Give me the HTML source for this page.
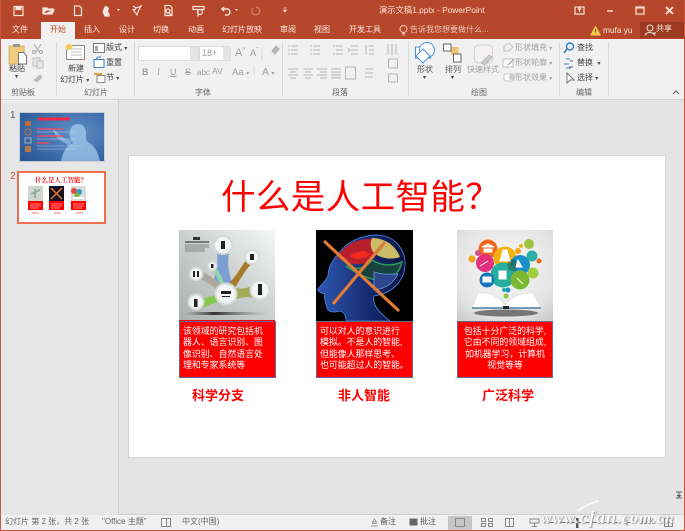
<!DOCTYPE html>
<html><head><meta charset="utf-8">
<style>
html,body{margin:0;padding:0;width:685px;height:531px;overflow:hidden;background:#e6e6e6}
body{position:relative;font-family:"Liberation Sans","Noto Sans CJK SC",sans-serif;filter:blur(.3px)}
.t{position:absolute;white-space:nowrap;line-height:1.2}
.b{position:absolute}
.tab{position:absolute;top:24px;font-size:8px;color:#fbe9e3;white-space:nowrap;line-height:12px}
.rb{color:#444;font-size:8px}
.dim{color:#a0a0a0;font-size:8px}
.grp{color:#666;font-size:8px}
.sep{position:absolute;top:42px;height:54px;width:1px;background:#dadada}
svg{position:absolute;overflow:visible}
.cap{position:absolute;background:#f00;color:#fff;font-size:8.9px;line-height:11.4px;border:1px solid #6a6a8a;box-sizing:border-box;top:321px;height:57px;padding-top:4px;white-space:nowrap}
.lab{position:absolute;top:388px;color:#f00;font-size:13px;font-weight:bold;white-space:nowrap;line-height:16px}
.st{position:absolute;top:517px;font-size:8px;color:#666;white-space:nowrap;line-height:10px}
</style></head><body>

<!-- title bar -->
<div class="b" style="left:0;top:0;width:685px;height:39px;background:#b7472a"></div>
<svg style="left:0;top:0" width="685" height="39" fill="none" stroke="#f6e4de" stroke-width="1.2">
<rect x="14" y="6.500" width="9" height="9"/><rect x="16" y="6.500" width="5" height="3" fill="#f6e4de"/>
<path d="M43 14V8h4l1 1h5v1M43 14h9l2-4h-8l-3 4" fill="#f6e4de"/>
<path d="M74.500 6h5l2 2v7.500h-7z"/>
<path d="M105 7a2 2 0 1 1 2 4l2 3v2h-4l-2-4z" fill="#f6e4de"/><path d="M117 9l3 0-1.500 2z" fill="#f6e4de" stroke="none"/>
<path d="M133 6l3 2 3-1 2-1-3 6-1 3-2-3-2-2 3-1"/>
<path d="M165 5.500h5l2 2v8h-7zM168 12l3 3"/><circle cx="168" cy="11" r="2"/>
<path d="M193 6.500h11v3h-11zM198 9.500v7"/><circle cx="200" cy="12" r="2.500"/>
<path d="M224 7l-2 2 2 2M222 9h5a3 3 0 0 1 0 6h-2" stroke-width="1.500"/><path d="M235 9l3 0-1.500 2z" fill="#f6e4de" stroke="none"/>
<path d="M253 8a4 4 0 1 0 3-1" stroke="#cd8470"/>
<path d="M283.500 8h3M283.500 10l3 0-1.500 2z" fill="#f6e4de" stroke-width=".7"/>
<rect x="575" y="7" width="9" height="7"/><path d="M579.500 8v4M578 9.500l1.500-1.500 1.500 1.500"/>
<path d="M607 11h6" stroke-width="1.400"/>
<rect x="636" y="7" width="8" height="7"/><path d="M636 7.500h8" stroke-width="2"/>
<path d="M666 7l7 7M673 7l-7 7" stroke-width="1.800"/>
</svg>
<div class="t" style="left:379px;top:6px;font-size:8.300px;color:#fbe4dc">演示文稿1.pptx - PowerPoint</div>

<!-- tabs -->
<div class="b" style="left:41px;top:22px;width:34px;height:18px;background:#f1f1f1"></div>
<div class="tab" style="left:12px">文件</div>
<div class="tab" style="left:50px;color:#c2492b">开始</div>
<div class="tab" style="left:84px">插入</div>
<div class="tab" style="left:119px">设计</div>
<div class="tab" style="left:153px">切换</div>
<div class="tab" style="left:188px">动画</div>
<div class="tab" style="left:222px">幻灯片放映</div>
<div class="tab" style="left:280px">审阅</div>
<div class="tab" style="left:314px">视图</div>
<div class="tab" style="left:349px">开发工具</div>
<svg style="left:399px;top:24px" width="10" height="13" fill="none" stroke="#eec6b8"><circle cx="4.500" cy="5" r="3.500"/><path d="M3 9.500h3M3.500 11h2"/></svg>
<div class="tab" style="left:410px;color:#eec6b8">告诉我您想要做什么...</div>
<svg style="left:590px;top:25px" width="12" height="11"><path d="M5.500 0.500L11 10.500H0z" fill="#f2c94c"/><path d="M5.500 4v3.500" stroke="#7a4a20"/></svg>
<div class="tab" style="left:603px;font-size:8.300px">mufa yu</div>
<div class="b" style="left:640px;top:22px;width:45px;height:16px;background:#9c3b22"></div>
<svg style="left:644px;top:24px" width="13" height="13" fill="none" stroke="#f6e4de"><circle cx="6" cy="4" r="3"/><path d="M1 11.500c1-4 8-4 10 0M9 9h3"/></svg>
<div class="tab" style="left:656px;top:23px;font-size:8px">共享</div>

<!-- ribbon -->
<div class="b" style="left:1px;top:39px;width:683px;height:60px;background:#f1f1f1"></div>
<div class="b" style="left:0;top:99px;width:685px;height:1px;background:#d6d6d6"></div>
<div class="b" style="left:0;top:100px;width:685px;height:3px;background:#ececec"></div>
<div class="sep" style="left:56px"></div><div class="sep" style="left:134px"></div><div class="sep" style="left:282px"></div><div class="sep" style="left:408px"></div><div class="sep" style="left:559px"></div><div class="sep" style="left:608px"></div>

<svg style="left:0;top:39px" width="685" height="60" fill="none" stroke="#9a9a9a" stroke-width="1">
<!-- paste -->
<rect x="9" y="7" width="15" height="18" fill="#f0ca7e" stroke="#d9b25f"/><rect x="13" y="5" width="7" height="3" fill="#999" stroke="none"/>
<path d="M18.500 13.500h5l3 3v8.500h-8z" fill="#fff" stroke="#777"/>
<path d="M34 5l6 9M41 5l-6 9" stroke="#aaa"/><circle cx="34" cy="13" r="1.500" stroke="#aaa"/><circle cx="41" cy="13" r="1.500" stroke="#aaa"/>
<rect x="33" y="19" width="7" height="8" stroke="#bbb" fill="#e8e8e8"/><rect x="37" y="22" width="6" height="7" stroke="#bbb" fill="#e8e8e8"/>
<path d="M34 41l6-5 2 2-5 5z" fill="#bbb" stroke="#bbb"/>
<!-- new slide -->
<rect x="66.500" y="6.500" width="18" height="14" fill="#fff" stroke="#888"/><path d="M71 10h11M71 13h11M71 16h11" stroke="#bbb"/><circle cx="69" cy="8" r="3" fill="#f2c94c" stroke="#eedf9a"/>
<!-- layout -->
<rect x="93.500" y="4.500" width="11" height="9" fill="#fff" stroke="#777"/><rect x="95" y="7" width="3" height="5" fill="#aaa" stroke="none"/>
<rect x="94" y="20.500" width="10" height="8" fill="#fff" stroke="#3a7fc1"/><path d="M96 20l2-2h3" stroke="#3a7fc1"/>
<rect x="97" y="36.500" width="8" height="7" fill="#fff" stroke="#888"/><path d="M94 35h8" stroke="#e8a030" stroke-width="2"/>
<!-- font boxes -->
<rect x="138.500" y="7.500" width="60" height="14" fill="#fff" stroke="#dcdcdc"/><rect x="190" y="8" width="8" height="13" fill="#e4e4e4" stroke="none"/>
<rect x="199.500" y="7.500" width="31" height="14" fill="#fff" stroke="#dcdcdc"/><rect x="223" y="8" width="7" height="13" fill="#e4e4e4" stroke="none"/>
<path d="M272 12l4-5 3 3-4 5z" fill="#bbb" stroke="#aaa"/>
<path d="M262 8v13" stroke="#dcdcdc"/>
<path d="M254 27v10" stroke="#dcdcdc"/>
<!-- paragraph -->
<g stroke="#b5b5b5">
<path d="M291 7h7M291 11h7M291 15h7M288 7h2M288 11h2M288 15h2"/>
<path d="M313 7h7M313 11h7M313 15h7M310 7h2M310 11h2M310 15h2"/>
<path d="M336 7h7M336 11h7M336 15h7M333 7h2M333 15h2"/>
<path d="M351 7h7M351 11h7M351 15h7M348 9l2 2-2 2"/>
<path d="M369 7h5M369 11h5M369 15h5M366 6v10"/>
<path d="M388 5v11M392 5v11M396 5v11"/>
<rect x="388.500" y="20" width="9" height="9"/>
<rect x="388.500" y="35" width="9" height="8"/>
<path d="M288 30h10M290 33h6M288 36h10M290 39h6"/>
<path d="M303 30h10M305 33h6M303 36h10M305 39h6"/>
<path d="M317 30h10M320 33h7M317 36h10M320 39h7"/>
<path d="M331 30h10M331 33h10M331 36h10M331 39h10"/>
<rect x="345.500" y="28" width="10" height="12"/>
<path d="M365 30h8M365 34h8M365 38h8"/>
</g>
<!-- shapes -->
<rect x="415.500" y="8" width="15" height="11" fill="#fff" stroke="#4a8fd0"/><circle cx="427" cy="11" r="7.500" fill="#fff" stroke="#4a8fd0"/><path d="M423 10l7 7-7 7-7-7z" fill="#fff" stroke="#4a8fd0"/>
<rect x="451" y="8" width="7.500" height="8" fill="#f0c476" stroke="none"/><rect x="443.500" y="5" width="7.500" height="7" fill="#fff" stroke="#666"/><rect x="453.500" y="15" width="7.500" height="8" fill="#fff" stroke="#666"/>
<rect x="474.500" y="6" width="18" height="18" rx="4" fill="#f4f0f4" stroke="#cfcfcf"/><path d="M481 24l8-8 3 2-7 8z" fill="#c9c9c9" stroke="#bbb"/>
<path d="M504 7l5-3 4 4-4 4h-5z" stroke="#c4c4c4" fill="#eee"/>
<rect x="503" y="20" width="10" height="8" stroke="#c4c4c4" fill="#fafafa"/><path d="M508 26l6-6" stroke="#999"/>
<rect x="504" y="35" width="10" height="7" rx="2" stroke="#c4c4c4" fill="#fff"/><circle cx="512" cy="38" r="3" fill="#ccc" stroke="none"/>
<!-- edit -->
<circle cx="570" cy="7.500" r="3.500" stroke="#2d7fc4" stroke-width="1.400"/><path d="M567 10l-3 4" stroke="#2d7fc4" stroke-width="1.600"/>
<path d="M566 20h4M564 25h5M566 29h5" stroke="#3a7fc1"/><path d="M570 22h3M569 28h4" stroke="#9050a0"/>
<path d="M567 34l0 10 3-3 4 0z" fill="#fff" stroke="#777"/>
<path d="M673 55l3-3 3 3" stroke="#666"/>
</svg>

<div class="t rb" style="left:9px;top:64px">粘贴</div>
<div class="t rb" style="left:15px;top:74px;font-size:6px">▾</div>
<div class="t rb" style="left:68px;top:64px">新建</div>
<div class="t rb" style="left:60px;top:75px">幻灯片 <span style="font-size:6px">▾</span></div>
<div class="t rb" style="left:106px;top:43px">版式 <span style="font-size:6px">▾</span></div>
<div class="t rb" style="left:106px;top:58px">重置</div>
<div class="t rb" style="left:106px;top:73px">节 <span style="font-size:6px">▾</span></div>
<div class="t dim" style="left:202px;top:48px;font-size:9px">18+</div>
<div class="t dim" style="left:235px;top:47px;font-size:11px">A<span style="font-size:6px;vertical-align:super">^</span></div>
<div class="t dim" style="left:250px;top:48px;font-size:9.500px">A<span style="font-size:6px;vertical-align:super">ˇ</span></div>
<div class="t dim" style="left:142px;top:67px;font-weight:bold;font-size:9px">B</div>
<div class="t dim" style="left:157px;top:67px;font-style:italic;font-family:'Liberation Serif';font-size:9px">I</div>
<div class="t dim" style="left:170px;top:67px;text-decoration:underline;font-size:9px">U</div>
<div class="t dim" style="left:185px;top:67px;text-decoration:line-through;font-size:9px">S</div>
<div class="t dim" style="left:197px;top:68px;font-size:8px">abc</div>
<div class="t dim" style="left:212px;top:66px;font-size:8.500px">AV</div>
<div class="t dim" style="left:232px;top:67px;font-size:9.500px">Aa <span style="font-size:6px">▾</span></div>
<div class="t dim" style="left:262px;top:66px;font-size:10.500px">A <span style="font-size:6px">▾</span></div>
<div class="t rb" style="left:417px;top:65px;color:#555">形状</div>
<div class="t rb" style="left:445px;top:65px;color:#555">排列</div>
<div class="t rb" style="left:423px;top:75px;font-size:6px">▾</div>
<div class="t rb" style="left:451px;top:75px;font-size:6px">▾</div>
<div class="t dim" style="left:467px;top:65px">快速样式</div>
<div class="t dim" style="left:515px;top:43px">形状填充 <span style="font-size:6px">▾</span></div>
<div class="t dim" style="left:515px;top:58px">形状轮廓 <span style="font-size:6px">▾</span></div>
<div class="t dim" style="left:515px;top:73px">形状效果 <span style="font-size:6px">▾</span></div>
<div class="t rb" style="left:577px;top:43px">查找</div>
<div class="t rb" style="left:577px;top:58px">替换 &nbsp;<span style="font-size:6px">▾</span></div>
<div class="t rb" style="left:577px;top:73px">选择 <span style="font-size:6px">▾</span></div>
<div class="t grp" style="left:11px;top:88px">剪贴板</div>
<div class="t grp" style="left:84px;top:88px">幻灯片</div>
<div class="t grp" style="left:195px;top:88px">字体</div>
<div class="t grp" style="left:332px;top:88px">段落</div>
<div class="t grp" style="left:471px;top:88px">绘图</div>
<div class="t grp" style="left:576px;top:88px">编辑</div>

<!-- panes -->
<div class="b" style="left:118px;top:100px;width:1px;height:416px;background:#cfcfcf"></div>
<div class="b" style="left:119px;top:100px;width:566px;height:416px;background:#e4e4e4"></div>
<div class="b" style="left:119px;top:514px;width:566px;height:1px;background:#cfcfcf"></div>

<div class="t" style="left:10px;top:110px;font-size:10px;color:#555">1</div>
<div class="t" style="left:10px;top:171px;font-size:10px;color:#d2492a">2</div>

<!-- thumb 1 -->
<svg style="left:19px;top:112px" width="86" height="50">
<defs><radialGradient id="g1" cx=".65" cy=".4" r=".8"><stop offset="0" stop-color="#5f8fc8"/><stop offset="1" stop-color="#2a5796"/></radialGradient></defs>
<rect x=".5" y=".5" width="85" height="49" fill="url(#g1)" stroke="#c9ced6"/>
<path d="M42 49c2-10 6-16 12-18-4-5-5-14 1-18 6-3 12 1 12 8 0 4-1 7 2 9 6 3 10 10 12 19z" fill="#a4c8ea" opacity=".75"/>
<path d="M33 16l12 10 8 3-3 5-12-8z" fill="#a4c8ea" opacity=".6"/>
<rect x="6" y="9" width="6" height="5" fill="#c06a3a"/><circle cx="9" cy="20" r="3" fill="none" stroke="#b5764a"/><rect x="6" y="26" width="6" height="5" fill="none" stroke="#aab"/><rect x="6" y="34" width="6" height="6" fill="#b5764a"/>
<path d="M19 7h32" stroke="#ee2b4a" stroke-width="3"/>
<path d="M18 17h26M18 24h26M18 31h12" stroke="#e6506a" stroke-width="1.500"/><path d="M18 20h38M18 27h38M18 34h44M18 37h40" stroke="#c8d8ee" stroke-width=".8" opacity=".6"/>
</svg>

<!-- thumb 2 -->
<div class="b" style="left:17px;top:171px;width:89px;height:53px;box-sizing:border-box;border:2px solid #ec7152;background:#fff"></div>
<div class="t" style="left:35px;top:177px;font-size:6.500px;color:#e11;font-weight:bold;font-family:'Liberation Serif','Noto Serif CJK SC',serif">什么是人工智能？</div>
<div class="b" style="left:28px;top:186px;width:15px;height:15px;background:#cfd6d0"></div>
<div class="b" style="left:49px;top:186px;width:15px;height:15px;background:#131320"></div>
<div class="b" style="left:71px;top:186px;width:15px;height:15px;background:#dcdcdc"></div>
<svg style="left:28px;top:186px" width="60" height="15"><path d="M3 8l9-4M7 3v9" stroke="#8fb0a0" stroke-width="2"/><path d="M23 2l11 11M34 2l-11 11" stroke="#e87a30" stroke-width="1.500"/><circle cx="46" cy="5" r="3" fill="#e2483a"/><circle cx="51" cy="6" r="3" fill="#2d9fd0"/><circle cx="49" cy="9" r="2.500" fill="#7bb83a"/><path d="M45 12h11" stroke="#fff" stroke-width="2"/></svg>
<div class="b" style="left:28px;top:201px;width:15px;height:9px;background:#f00"></div>
<div class="b" style="left:49px;top:201px;width:15px;height:9px;background:#f00"></div>
<div class="b" style="left:71px;top:201px;width:15px;height:9px;background:#f00"></div>
<svg style="left:28px;top:201px" width="60" height="9" stroke="#ffb3b3" stroke-width=".8"><path d="M2 3h11M2 5h11M2 7h9M23 3h11M23 5h11M23 7h9M45 3h11M45 5h11M45 7h9"/></svg>
<svg style="left:28px;top:212px" width="60" height="3" stroke="#f77" stroke-width="1"><path d="M4 1h7M26 1h7M48 1h7"/></svg>

<!-- slide -->
<div class="b" style="left:128px;top:155px;width:538px;height:303px;background:#fff;border:1px solid #d4d4d4;box-sizing:border-box"></div>
<div class="t" style="left:221px;top:177px;font-size:34.500px;color:#f00;line-height:42px;letter-spacing:.4px">什么是人工智能？</div>

<!-- image 1 -->
<svg style="left:179px;top:230px" width="96" height="91">
<defs>
<linearGradient id="a1" x1="0" y1="1" x2="1" y2="0"><stop offset="0" stop-color="#a9b1af"/><stop offset=".55" stop-color="#ced3d1"/><stop offset="1" stop-color="#f6f7f7"/></linearGradient>
<linearGradient id="s1" x1="0" y1="0" x2="1" y2="0"><stop offset="0" stop-color="#555" stop-opacity="0"/><stop offset=".35" stop-color="#333"/><stop offset="1" stop-color="#888" stop-opacity="0"/></linearGradient>
</defs>
<rect width="96" height="91" fill="url(#a1)"/>
<rect x="6" y="82" width="84" height="3" fill="url(#s1)"/>
<path d="M38 20h12c-1 14-2 18 4 36H33c5-16 6-22 5-36z" fill="#7b9fd2"/>
<path d="M70 26l6 5C66 38 62 50 54 60l-8-4c10-6 16-20 24-30z" fill="#a87a2c"/>
<path d="M33 38l3-2c4 6 8 12 10 20l-4 1c-3-8-6-13-9-19z" fill="#96d1ab"/>
<path d="M19 40C30 44 36 50 44 56l-4 6C32 54 26 50 16 48z" fill="#ada79b"/>
<path d="M74 55v13C66 66 62 68 54 70l2-12c6 1 12 1 18-3z" fill="#a3aa55"/>
<path d="M22 68c8 0 14-2 20-8l2 10c-8 2-14 6-22 8z" fill="#87c94e"/>
<g fill="#f4f6f5" stroke="#d5d9d8" stroke-width="2">
<circle cx="44" cy="15" r="9"/><circle cx="73" cy="27" r="7"/><circle cx="33" cy="36" r="4.500"/><circle cx="17" cy="44" r="6.500"/><circle cx="81" cy="60" r="9.500"/><circle cx="17" cy="72" r="7.500"/><circle cx="47" cy="64" r="10.500"/>
</g>
<g fill="#222"><rect x="42" y="11" width="4" height="8"/><rect x="71" y="24" width="4" height="6"/><rect x="32" y="34" width="2.500" height="4"/><rect x="14" y="41" width="2" height="6"/><rect x="18" y="41" width="2" height="6"/><rect x="79" y="54" width="4" height="11"/><rect x="15" y="69" width="3.500" height="8"/><rect x="42" y="61" width="10" height="3"/><rect x="43" y="66" width="8" height="1"/></g>
<rect x="14" y="7" width="7" height="3" fill="#333"/><path d="M6 12h24" stroke="#444" stroke-width="1.300"/><path d="M6 15h24M6 17h24M6 19h20M6 21h20" stroke="#888"/>
</svg>

<!-- image 2 -->
<svg style="left:316px;top:230px" width="97" height="91">
<defs><linearGradient id="h2" x1="0" y1="0" x2="1" y2="0"><stop offset="0" stop-color="#2f58b0"/><stop offset=".6" stop-color="#14296e"/><stop offset="1" stop-color="#0a1440"/></linearGradient></defs>
<rect width="97" height="91" fill="#000"/>
<path d="M24 22C34 8 55 3 68 6 84 10 92 26 88 42 84 56 72 64 58 66 56 74 62 82 74 91H30C30 85 28 82 24 81 18 83 12 82 11 78 10 74 9 72 9 70 8 68 8 66 9 64 5 63 1 61 2 59 6 54 10 50 12 46 12 38 16 30 24 22z" fill="url(#h2)" stroke="#4a86e8" stroke-width=".8"/>
<path d="M21 28C28 14 42 8 58 9c3 8 1 20-8 24-10 3-20 0-29-5z" fill="#b81e2b"/>
<path d="M34 26c6-5 16-7 20-2-3 5-15 7-20 2z" fill="#f02a20"/>
<path d="M56 8c13 0 24 8 28 19-8 3-18 2-26-4-4-5-4-10-2-15z" fill="#c9bb68"/>
<path d="M30 36c10 5 20 2 26-6 8 5 18 7 30 2-2 8-6 14-14 18-14 2-28-4-42-14z" fill="#17423e" stroke="#2d9a55" stroke-width="1.500"/>
<path d="M58 42c8 3 16 2 24 2-5 10-14 15-24 16z" fill="#2c4690" stroke="#6a9fd0" stroke-width=".8"/>
<path d="M8 11l75 70M69 12L17 74" stroke="#e27b33" stroke-width="3.200"/>
</svg>

<!-- image 3 -->
<svg style="left:457px;top:230px" width="96" height="91">
<defs><radialGradient id="g3" cx=".5" cy=".4" r=".8"><stop offset="0" stop-color="#fafafa"/><stop offset=".7" stop-color="#e3e3e3"/><stop offset="1" stop-color="#c4c4c4"/></radialGradient></defs>
<rect width="96" height="91" fill="url(#g3)"/>
<ellipse cx="49" cy="83" rx="32" ry="3.500" fill="#777"/>
<circle cx="31" cy="19" r="9.500" fill="#ee6b1d"/><circle cx="48" cy="28" r="11.500" fill="#f4b111"/><circle cx="28" cy="33" r="9" fill="#e2307f"/>
<circle cx="63" cy="35" r="10" fill="#1a8fc9"/><circle cx="46" cy="45" r="12.500" fill="#26aea0"/><circle cx="63" cy="50" r="9.500" fill="#7cb82f"/>
<circle cx="30" cy="50" r="7.500" fill="#1777b9"/><circle cx="76" cy="43" r="5.500" fill="#a0cc3d"/><circle cx="75" cy="26" r="5.500" fill="#2ab0a5"/>
<circle cx="15" cy="29" r="3.500" fill="#f2a41b"/><circle cx="21" cy="23" r="3" fill="#d0508a"/><circle cx="61" cy="21" r="3" fill="#f4a01b"/><circle cx="72" cy="14" r="5" fill="#9bc53d"/><circle cx="82" cy="31" r="2.500" fill="#ee6b1d"/><circle cx="64" cy="16" r="2" fill="#f4b111"/>
<circle cx="47" cy="60" r="2" fill="#26aea0"/><circle cx="51" cy="60" r="2.500" fill="#1a8fc9"/><circle cx="49" cy="66" r="2.500" fill="#8cc63f"/>
<path d="M57 29a12 12 0 0 1 2 12 12 12 0 0 1-7-1 12 12 0 0 1-1-9z" fill="#245a3c" opacity=".55"/>
<path d="M25 17h12l-6-3zM27 19h8v3h-8zM46 20h4l3 11h-10zM23 36l8-5M42 41h7v8h-7zM26 47h8v5h-8zM61 30l4 7h-6zM60 48l6 6" fill="#fff" stroke="#fff"/>
<path d="M15 78l6-15c11-2 21 4 27 12 6-8 16-13 28-12l8 15z" fill="#fff" stroke="#e4e4e4"/>
<path d="M15 78h69" stroke="#4a7fa0" stroke-width="1.500"/><rect x="46" y="76" width="6" height="3" fill="#222"/>
</svg>

<div class="b" style="left:179px;top:320px;width:96px;height:2px;background:#f00"></div>
<div class="cap" style="left:179px;width:97px;padding-left:3px">该领域的研究包括机<br>器人、语言识别、图<br>像识别、自然语言处<br>理和专家系统等</div>
<div class="cap" style="left:316px;width:97px;padding-left:3px">可以对人的意识进行<br>模拟。不是人的智能,<br>但能像人那样思考、<br>也可能超过人的智能。</div>
<div class="cap" style="left:457px;width:96px;text-align:center">包括十分广泛的科学,<br>它由不同的领域组成,<br>如机器学习，计算机<br>视觉等等</div>
<div class="lab" style="left:192px">科学分支</div>
<div class="lab" style="left:338px">非人智能</div>
<div class="lab" style="left:482px">广泛科学</div>

<!-- status -->
<div class="b" style="left:0;top:515px;width:685px;height:15px;background:#f1f1f1"></div>
<div class="b" style="left:0;top:530px;width:685px;height:1px;background:#c9583a"></div>
<div class="b" style="left:0;top:0;width:1px;height:531px;background:#c9583a"></div>
<div class="b" style="left:684px;top:0;width:1px;height:531px;background:#c9583a"></div>
<div class="st" style="left:5px">幻灯片 第 2 张，共 2 张</div>
<div class="st" style="left:102px">"Office 主题"</div>
<svg style="left:161px;top:517px" width="12" height="11" fill="none" stroke="#888"><path d="M.5 1.500h5v8h-5zM5.500 1.500h4v8h-4z"/></svg>
<div class="st" style="left:182px">中文(中国)</div>
<div class="st" style="left:380px;color:#555">备注</div>
<div class="st" style="left:420px;color:#555">批注</div>
<svg style="left:370px;top:516px" width="315" height="14" fill="none" stroke="#888">
<path d="M1 10h7M2 7.500h5M4.500 3l-2 3h4z" stroke="#999"/>
<path d="M40 3h7v6h-7z" fill="#666" stroke="#666"/>
<rect x="78" y="0" width="24" height="14" fill="#c6c6c6" stroke="none"/><rect x="85.500" y="2.500" width="9" height="8"/>
<rect x="111.500" y="2.500" width="4" height="3"/><rect x="118.500" y="2.500" width="4" height="3"/><rect x="111.500" y="7.500" width="4" height="3"/><rect x="118.500" y="7.500" width="4" height="3"/>
<rect x="135.500" y="2.500" width="8" height="8"/><path d="M139.500 2.500v8"/>
<path d="M160 3h9v4h-9zM164.500 7v3M162 10.500h5"/>
<path d="M180 6.500h4M190 6.500h60M254 6.500h6M257 3.500v6" stroke="#777"/>
<rect x="206" y="2" width="2.500" height="10" fill="#555" stroke="none"/>
<rect x="294.500" y="2.500" width="8" height="8"/><path d="M294.500 6.500h8M298.500 2.500v8"/>
</svg>
<div class="st" style="left:639px">65%</div>
<svg style="left:675px;top:491px" width="8" height="8" stroke="#666"><path d="M1 1h6M1 7h6M4 1v5M2 4l2 2 2-2"/></svg>

<!-- watermark -->
<svg style="left:575px;top:499px" width="40" height="20" fill="none" stroke="#fff" stroke-width="1.500"><path d="M3 12c6-5 12-8 21-10"/></svg>
<div class="t" style="left:541px;top:507px;font-size:15.500px;color:#fff;font-style:italic;font-weight:bold;font-family:'Liberation Serif',serif;letter-spacing:1.100px;text-shadow:0 0 1px #888,1px 1px 1px #999;opacity:.92">www.<span style="font-size:18px">cfan</span>.com.cn</div>
</body></html>
